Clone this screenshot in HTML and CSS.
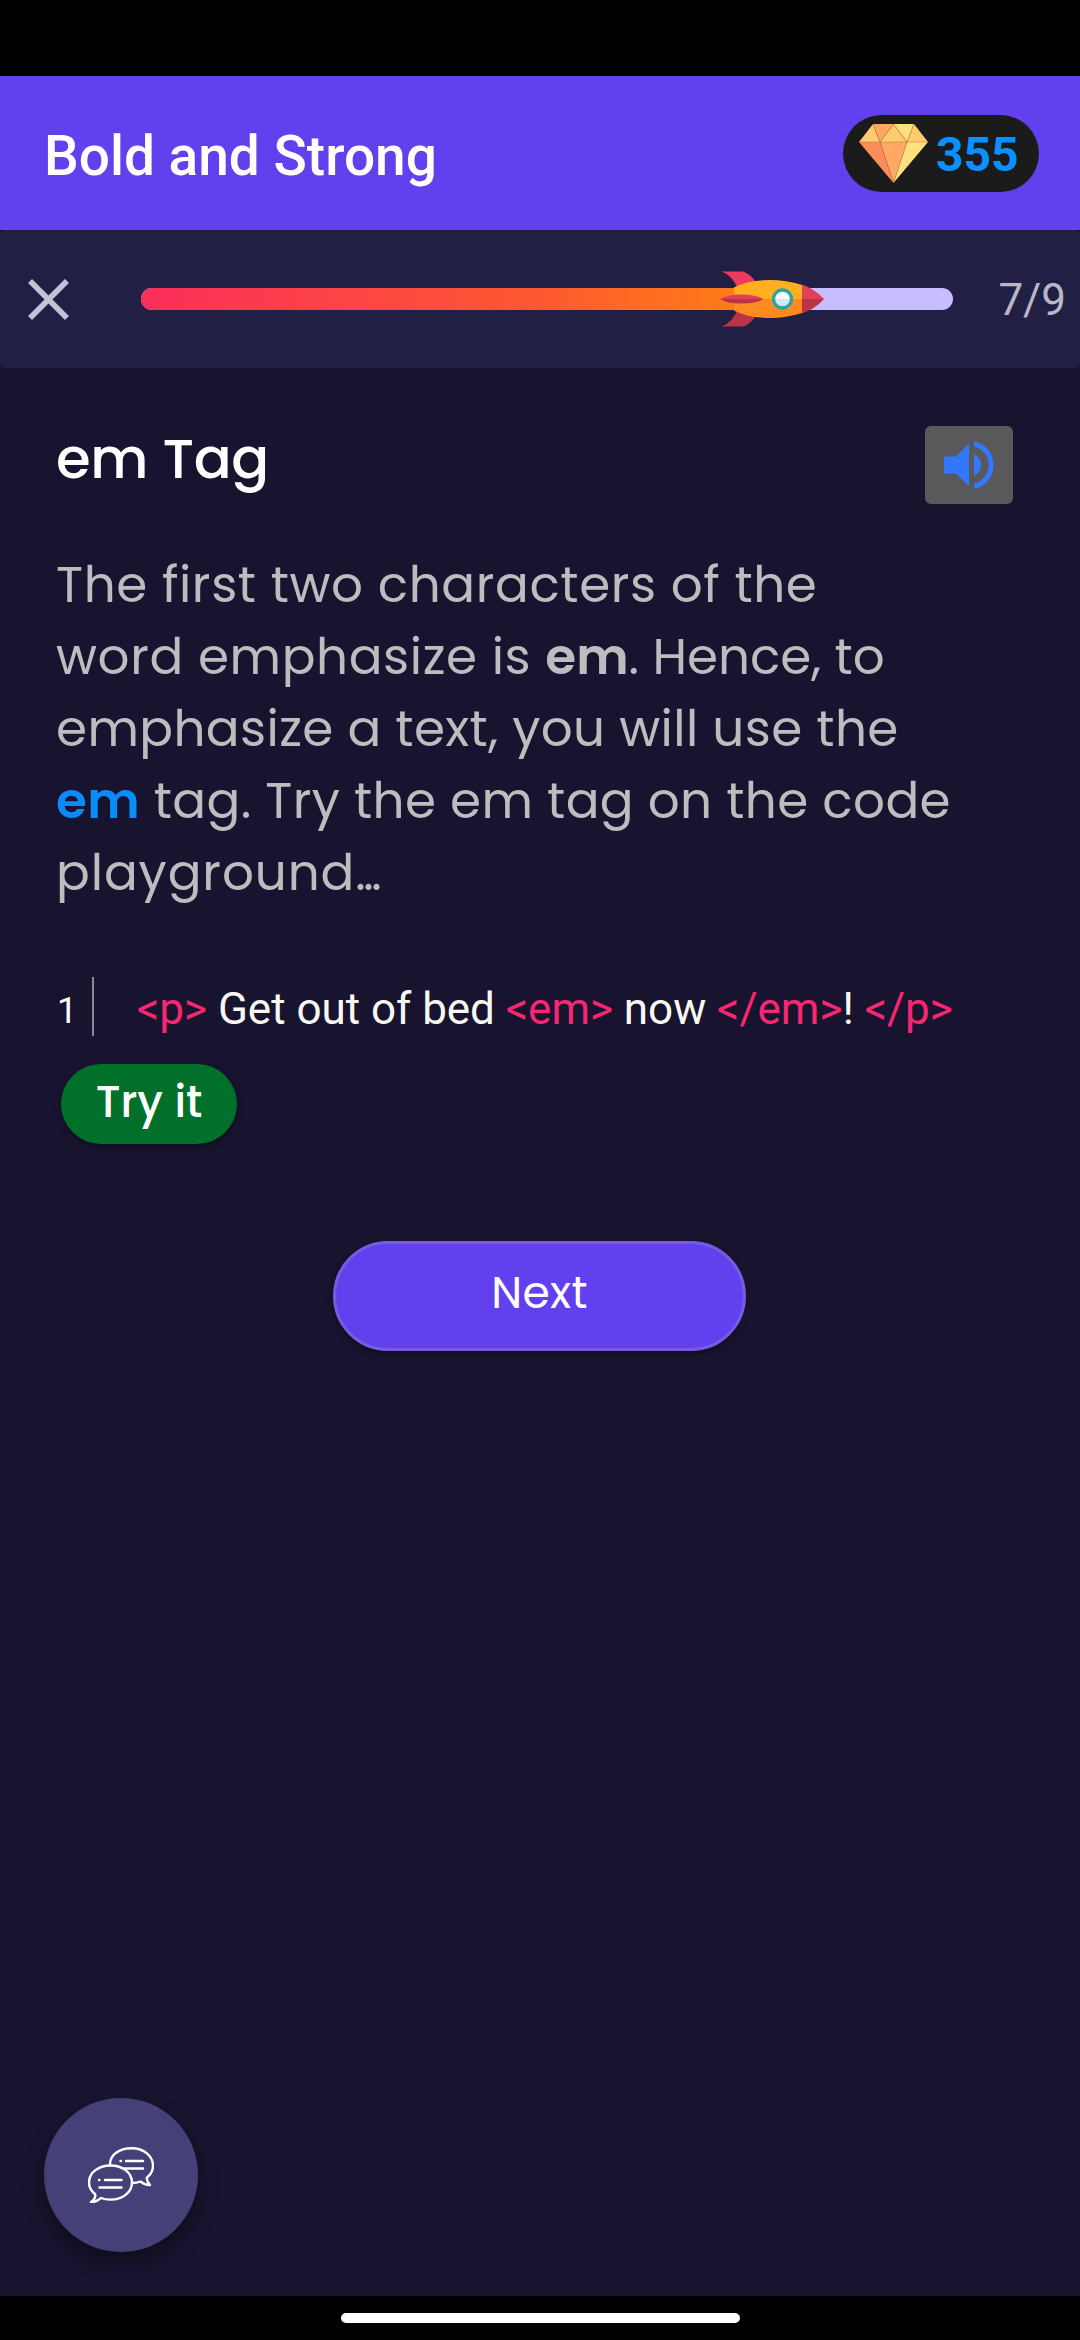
FILE: index.html
```html
<!DOCTYPE html>
<html lang="en">
<head>
<meta charset="utf-8">
<title>Bold and Strong</title>
<link rel="stylesheet" href="styles.css">
</head>
<body>
<div class="screen">
  <header class="topbar">
    <h1 class="topbar-title">Bold and Strong</h1>
    <div class="gems">
      <svg class="gem" viewBox="0 0 69 59">
        <path d="M0 18 14 0 21 18Z" fill="#ffcb70"/>
        <path d="M14 0H34.500L21 18Z" fill="#ffa861"/>
        <path d="M34.500 0 21 18H48Z" fill="#ffcb70"/>
        <path d="M34.500 0H55L48 18Z" fill="#ffe07f"/>
        <path d="M55 0 69 18H48Z" fill="#ffcb70"/>
        <path d="M0 18H21L34.500 59Z" fill="#ff8c5a"/>
        <path d="M21 18H48L34.500 59Z" fill="#ffa965"/>
        <path d="M48 18H69L34.500 59Z" fill="#ffe07f"/>
        <path d="M0 18H69M14 0 21 18 34.500 0 48 18 55 0M21 18 34.500 59 48 18" fill="none" stroke="#8a5a2c" stroke-opacity=".4" stroke-width=".8"/>
      </svg>
      <span class="gem-count">355</span>
    </div>
  </header>

  <section class="progress">
    <svg class="close" viewBox="0 0 40 40"><path d="M2 2 38 38M38 2 2 38" stroke="#c3c3d6" stroke-width="5.500" fill="none"/></svg>
    <div class="track">
      <div class="fill" style="width:82%"></div>
      <svg class="rocket" viewBox="0 0 104 56">
        <path d="M1.500 .5H23Q31 3 37 13L18 18Q12 4 1.500 .5Z" fill="#ef3b5b"/>
        <path d="M1.500 55.500H23Q31 53 37 43L18 38Q12 52 1.500 55.500Z" fill="#bb3347"/>
        <path d="M14 28V16.500Q28 9 50 9Q66 9 82 14V28Z" fill="#ffb01f"/>
        <path d="M14 28V39.500Q28 47 50 47Q66 47 82 42V28Z" fill="#ff8a20"/>
        <path d="M82 13.500Q95 18 104 28H82Z" fill="#e0415a"/>
        <path d="M82 42.500Q95 38 104 28H82Z" fill="#bb3347"/>
        <path d="M0 28Q7 23.500 21 23.500Q36 23.500 43.500 28Z" fill="#e0415a"/>
        <path d="M0 28Q7 32.500 21 32.500Q36 32.500 43.500 28Z" fill="#bb3347"/>
        <circle cx="62.500" cy="28" r="9.200" fill="#fff"/>
        <path d="M53.500 28a9 9 0 0 0 18 0Z" fill="#cdeafb"/>
        <circle cx="62.500" cy="28" r="9" fill="none" stroke="#2ba3a5" stroke-width="3.300"/>
      </svg>
    </div>
    <span class="count">7/9</span>
  </section>

  <main class="lesson">
    <div class="lesson-head">
      <h2 class="lesson-title">em Tag</h2>
      <button class="speak" aria-label="Read aloud">
        <svg viewBox="0 0 50 48"><path d="M0 15.500H12L25 2.500V45.500L12 32.500H0ZM30 13Q37 17 37 24T30 35ZM30 0A24.500 24.500 0 0 1 30 48V42.500A19 19 0 0 0 30 5.500Z" fill="#3278ff"/></svg>
      </button>
    </div>

    <p class="copy">
      <span class="line loose">The first two characters of the</span>
      <span class="line"><span class="loose">word emphasize is </span><b>em</b>. Hence, to</span>
      <span class="line snug">emphasize a text, you will use the</span>
      <span class="line snug"><b class="key">em</b> tag. Try the em tag on the code</span>
      <span class="line wide">playground<span class="dots">...</span></span>
    </p>

    <div class="code">
      <span class="num">1</span>
      <code><i>&lt;p&gt;</i> Get out of bed <i>&lt;em&gt;</i> now <i>&lt;/em&gt;</i>! <i>&lt;/p&gt;</i></code>
    </div>
    <button class="try">Try it</button>
    <button class="next">Next</button>
  </main>

  <button class="chat" aria-label="Discussion">
    <svg viewBox="0 0 66 56" fill="none" stroke="#fff" stroke-width="2.400" stroke-linejoin="round" stroke-linecap="round">
      <path d="M22 17C22 8 31 1.200 43.500 1.200C56 1.200 65 9 65 19C65 24 62 28 59 30.500C58.500 33 60 36 62 38C58 38.500 55 36.500 52.500 34.500C50 35.500 47 36 44 36"/>
      <path d="M22.500 18.500C10 18.500 1 26 1 35.500C1 40 3 44 7 47C8 50 6 53 3 55C7 55.500 10 53.500 13 51C16 52.200 19 52.600 22.500 52.600C35 52.600 44 45 44 35.500C44 26 35 18.500 22.500 18.500Z"/>
      <path d="M32.500 14h.5M38 14H55M36 21.500H55M11 33h.5M17 33H33.500M11.500 40.500H33.500"/>
    </svg>
  </button>
</div>
<footer class="navbar"><span class="handle"></span></footer>
</body>
</html>
```
FILE: styles.css
```css
* { box-sizing: border-box; }
body {
  margin: 0;
  width: 1080px;
  height: 2340px;
  padding-top: 76px;
  display: flex;
  flex-direction: column;
  background: #000;
  font-family: Roboto, sans-serif;
  overflow: hidden;
}
button { border: 0; padding: 0; font: inherit; }
h1, h2, p { margin: 0; }
svg { display: block; }

.screen {
  flex: 1;
  display: flex;
  flex-direction: column;
  background: #18142f;
}

.topbar {
  height: 154px;
  padding: 0 41px 0 44px;
  display: flex;
  align-items: center;
  justify-content: space-between;
  background: #6240ee;
}
.topbar-title {
  padding-top: 6px;
  color: #fff;
  font-size: 55px;
  font-weight: 500;
  line-height: 64px;
}
.gems {
  width: 196px;
  height: 77px;
  padding-left: 16px;
  display: flex;
  align-items: center;
  gap: 8px;
  border-radius: 39px;
  background: #1b1b1b;
  color: #0a91ff;
  font-size: 48px;
  font-weight: 700;
  line-height: 77px;
}
.gem { width: 69px; height: 59px; }
.gem-count { padding-top: 2px; }

.progress {
  height: 138px;
  padding: 0 14px 0 28px;
  display: flex;
  align-items: center;
  border-radius: 5px;
  background: #221f45;
}
.close { width: 41px; height: 41px; }
.track {
  position: relative;
  width: 812px;
  height: 22px;
  margin-left: 72px;
  border-radius: 11px;
  background: #c7bdff;
}
.fill {
  height: 22px;
  border-radius: 11px 0 0 11px;
  background: linear-gradient(90deg, #fb2e5c, #fd592f 60%, #ff7a18 88%);
}
.rocket {
  position: absolute;
  left: 579px;
  top: -17px;
  width: 104px;
  height: 56px;
}
.count {
  flex: 1;
  padding-top: 1px;
  color: #b9b7c5;
  font-size: 44px;
  text-align: right;
}

.lesson {
  flex: 1;
  display: flex;
  flex-direction: column;
  padding: 58px 67px 0 56px;
  font-family: Poppins, Inter, sans-serif;
}
.lesson-head {
  display: flex;
  justify-content: space-between;
}
.lesson-title {
  color: #fff;
  font-size: 56px;
  font-weight: 500;
  line-height: 66px;
  letter-spacing: -.3px;
}
.speak {
  width: 88px;
  height: 78px;
  display: flex;
  align-items: center;
  justify-content: center;
  border-radius: 6px;
  background: #59595b;
}
.speak svg { width: 50px; height: 48px; }

.copy {
  margin-top: 45px;
  color: #bdbdbf;
  font-size: 50px;
  line-height: 72px;
}
.line { display: block; white-space: nowrap; }
.loose { letter-spacing: .62px; }
.snug { letter-spacing: .38px; }
.wide { letter-spacing: .9px; }
.dots { letter-spacing: -2.5px; }
.copy b { font-weight: 600; }
.key { color: #0a8cf8; }

.code {
  height: 59px;
  margin-top: 68px;
  display: flex;
  font-family: Roboto, sans-serif;
  line-height: 65px;
}
.num {
  width: 38px;
  padding: 2px 0 0 1px;
  border-right: 2px solid #8b8996;
  color: #fff;
  font-size: 36px;
}
.code code {
  padding-left: 43px;
  color: #f8f8f2;
  font: 44px/65px Roboto, sans-serif;
  letter-spacing: -.03px;
  white-space: pre;
}
.code i { font-style: normal; color: #f92672; }

.try {
  width: 176px;
  height: 80px;
  margin: 28px 0 0 5px;
  padding-bottom: 6px;
  border-radius: 40px;
  background: #00702a;
  box-shadow: 0 3px 6px rgba(0, 0, 0, .35);
  color: #fff;
  font-size: 44px;
  font-weight: 500;
}
.next {
  width: 413px;
  height: 110px;
  margin: 97px 0 0 277px;
  padding-bottom: 8px;
  border: 3px solid #775ce2;
  border-radius: 55px;
  background: #6240ee;
  box-shadow: 0 3px 6px rgba(0, 0, 0, .35);
  color: #fff;
  font-size: 44px;
  letter-spacing: .3px;
}

.chat {
  width: 154px;
  height: 154px;
  margin: 0 0 44px 44px;
  display: flex;
  align-items: center;
  justify-content: center;
  border-radius: 50%;
  background: #454178;
  box-shadow: 0 10px 20px rgba(0, 0, 0, .4);
}
.chat svg { width: 66px; height: 56px; }

.navbar {
  height: 44px;
  padding-top: 17px;
  display: flex;
  justify-content: center;
}
.handle {
  width: 399px;
  height: 10px;
  border-radius: 5px;
  background: #fff;
}
```
